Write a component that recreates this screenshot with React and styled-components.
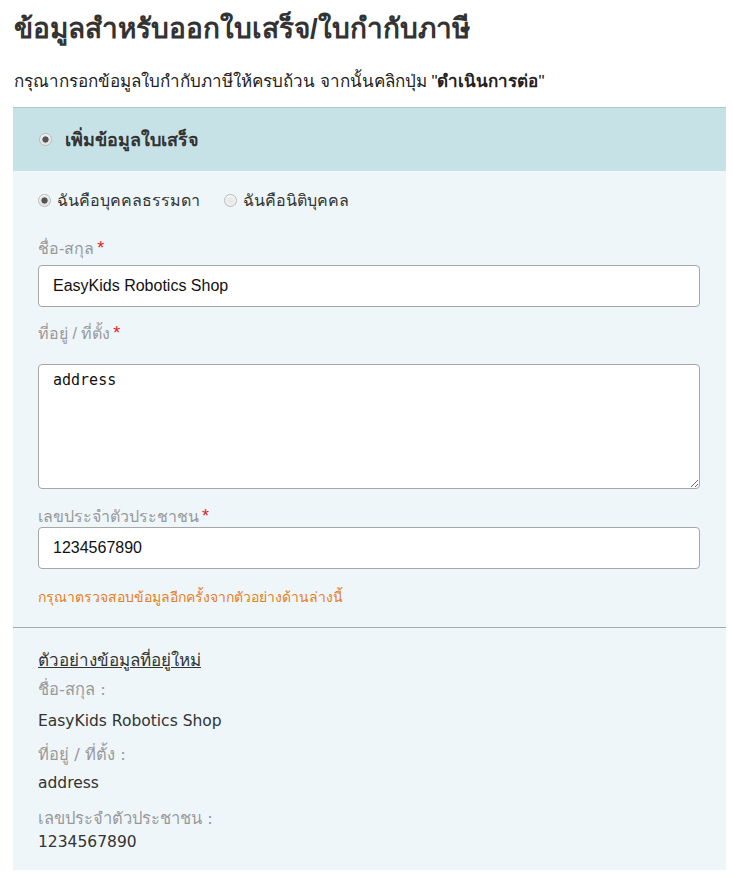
import React from "react";
import styled, { createGlobalStyle } from "styled-components";

const Global = createGlobalStyle`
  html, body { margin: 0; padding: 0; background: #fff; }
  body { font-family: "Liberation Sans", Arial, sans-serif; color: #333; }
  * { box-sizing: border-box; }
`;

const Page = styled.div`
  padding: 11px 7px 8px 13px;
  width: 733px;
`;

const Title = styled.h1`
  margin: 0 0 0 1px;
  font-size: 28px;
  font-weight: bold;
  line-height: 36px;
  color: #333;
`;

const Intro = styled.p`
  margin: 24px 0 14px 1px;
  font-size: 17px;
  line-height: 22px;
  color: #222;
  b { font-weight: bold; }
`;

const Panel = styled.section`
  background: #eef6f9;
  border-top: 1px solid #a8ccd3;
`;

const PanelHeader = styled.div`
  background: #c7e2e7;
  height: 63px;
  display: flex;
  align-items: center;
  padding-left: 26px;
  gap: 13px;
  font-size: 18px;
  font-weight: bold;
  color: #333;
`;

const Radio = styled.span`
  display: inline-block;
  width: 13px;
  height: 13px;
  border-radius: 50%;
  border: 1px solid #b9b9b9;
  background: radial-gradient(circle, ${p => (p.$checked ? "#555 0 2.8px, #e2e2e2 3.4px" : "#e6e6e6 0")} , #f4f4f4 100%);
  box-shadow: inset 0 1px 1px rgba(255,255,255,0.8);
  flex-shrink: 0;
`;

const Body = styled.div`
  padding: 0 26px 0 25px;
`;

const RadioRow = styled.div`
  display: flex;
  align-items: center;
  height: 20px;
  margin-top: 19px;
  font-family: "DejaVu Sans", Tahoma, sans-serif;
  font-size: 16px;
  color: #333;
`;

const RadioOption = styled.label`
  display: flex;
  align-items: center;
  gap: 6px;
  margin-right: 24px;
`;

const FieldLabel = styled.div`
  font-size: 16px;
  line-height: 20px;
  color: #999;
  margin-top: ${p => p.$mt}px;
  margin-bottom: ${p => p.$mb}px;
`;

const Star = styled.span`
  color: #e4202a;
  font-size: 18px;
  margin-left: 3px;
`;

const TextInput = styled.input`
  display: block;
  width: 100%;
  height: 42px;
  border: 1px solid #a6a6a6;
  border-radius: 4px;
  background: #fff;
  padding: 0 14px;
  font-family: "Liberation Sans", Arial, sans-serif;
  font-size: 16px;
  color: #111;
  outline: none;
`;

const TextArea = styled.textarea`
  display: block;
  width: 100%;
  height: 125px;
  border: 1px solid #a6a6a6;
  border-radius: 4px;
  background: #fff;
  padding: 6px 14px;
  font-family: "DejaVu Sans Mono", monospace;
  font-size: 15px;
  color: #111;
  outline: none;
  margin: 0;
`;

const Note = styled.div`
  margin-top: 18px;
  padding-bottom: 20px;
  font-size: 14px;
  line-height: 20px;
  color: #e67e22;
`;

const Divider = styled.hr`
  margin: 0;
  border: none;
  border-top: 1px solid #aaa;
`;

const Preview = styled.div`
  padding: 22px 25px 18px;
  font-family: "DejaVu Sans", Tahoma, sans-serif;
  font-size: 15.5px;
  line-height: 20px;
`;

const PreviewHeading = styled.div`
  text-decoration: underline;
  color: #333;
  font-size: 17px;
  margin-bottom: 10px;
`;

const PreviewLabel = styled.div`
  color: #999;
  font-size: 16.5px;
  margin-bottom: ${p => p.$mb ?? 11}px;
`;

const PreviewValue = styled.div`
  color: #333;
  margin-bottom: ${p => p.$mb ?? 14}px;
`;

export default function App() {
  return (
    <>
      <Global />
      <Page>
        <Title>ข้อมูลสำหรับออกใบเสร็จ/ใบกำกับภาษี</Title>
        <Intro>
          กรุณากรอกข้อมูลใบกำกับภาษีให้ครบถ้วน จากนั้นคลิกปุ่ม "<b>ดำเนินการต่อ</b>"
        </Intro>
        <Panel>
          <PanelHeader>
            <Radio $checked />
            <span>เพิ่มข้อมูลใบเสร็จ</span>
          </PanelHeader>
          <Body>
            <RadioRow>
              <RadioOption>
                <Radio $checked />
                ฉันคือบุคคลธรรมดา
              </RadioOption>
              <RadioOption>
                <Radio />
                ฉันคือนิติบุคคล
              </RadioOption>
            </RadioRow>
            <FieldLabel $mt={28} $mb={6}>
              ชื่อ-สกุล<Star>*</Star>
            </FieldLabel>
            <TextInput readOnly value="EasyKids Robotics Shop" />
            <FieldLabel $mt={16} $mb={20}>
              ที่อยู่ / ที่ตั้ง<Star>*</Star>
            </FieldLabel>
            <TextArea readOnly defaultValue="address" />
            <FieldLabel $mt={17} $mb={0}>
              เลขประจำตัวประชาชน<Star>*</Star>
            </FieldLabel>
            <TextInput readOnly value="1234567890" />
            <Note>กรุณาตรวจสอบข้อมูลอีกครั้งจากตัวอย่างด้านล่างนี้</Note>
          </Body>
          <Divider />
          <Preview>
            <PreviewHeading>ตัวอย่างข้อมูลที่อยู่ใหม่</PreviewHeading>
            <PreviewLabel>ชื่อ-สกุล :</PreviewLabel>
            <PreviewValue>EasyKids Robotics Shop</PreviewValue>
            <PreviewLabel $mb={8}>ที่อยู่ / ที่ตั้ง :</PreviewLabel>
            <PreviewValue $mb={16}>address</PreviewValue>
            <PreviewLabel $mb={3}>เลขประจำตัวประชาชน :</PreviewLabel>
            <PreviewValue $mb={0}>1234567890</PreviewValue>
          </Preview>
        </Panel>
      </Page>
    </>
  );
}
